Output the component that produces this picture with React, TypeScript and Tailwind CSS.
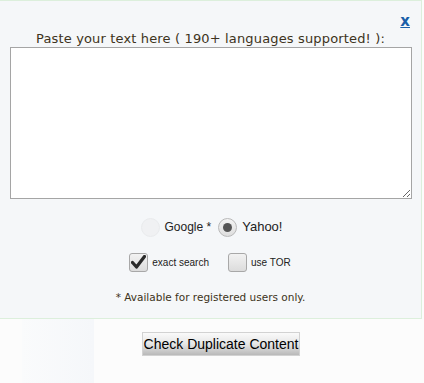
import { useState } from 'react'

export default function App() {
  const [engine, setEngine] = useState('yahoo')
  const [exact, setExact] = useState(true)
  const [tor, setTor] = useState(false)

  return (
    <div className="w-[424px] h-[383px] bg-[#fcfcfc] overflow-hidden">
      {/* main panel */}
      <div className="w-[422px] h-[319px] bg-[#f5f7f9] border-t border-r border-b border-[#dcefdc] flex flex-col">
        <div className="flex justify-end pr-[11px] pt-[12px] h-[30px]">
          <a
            href="#"
            className="text-[#1a5fa8] font-bold underline text-[15px] leading-[16px] font-['DejaVu_Sans',sans-serif]"
          >
            x
          </a>
        </div>
        <p className="text-center text-[13px] leading-[16px] text-[#3d3320] font-['DejaVu_Sans',sans-serif] tracking-[0.15px]">
          Paste your text here ( 190+ languages supported! ):
        </p>

        <div className="pl-[10px]">
          <textarea className="block w-[402px] h-[152px] bg-white border border-[#a5a5a5] resize-y outline-none" />
        </div>

        {/* search engine */}
        <div className="flex justify-center items-center gap-[3px] mt-[18px] h-[20px] font-['Liberation_Sans',sans-serif] text-[12px] text-[#222]">
          <span className="w-[19px] h-[19px] rounded-full border border-[#e9ebed] bg-[#f0f1f3] ml-[2px]" />
          <span className="ml-[2px] mr-[4px]">Google *</span>
          <button
            onClick={() => setEngine('yahoo')}
            className="w-[19px] h-[19px] rounded-full border border-[#b9b9b9] bg-gradient-to-b from-[#f4f4f4] to-[#dedede] flex items-center justify-center"
          >
            {engine === 'yahoo' && <span className="w-[9px] h-[9px] rounded-full bg-[#555]" />}
          </button>
          <span className="ml-[2px] text-[13px]">Yahoo!</span>
        </div>

        {/* options */}
        <div className="flex justify-center items-center mt-[15px] h-[20px] font-['Liberation_Sans',sans-serif] text-[10px] text-[#222] pr-[1px]">
          <button
            onClick={() => setExact(!exact)}
            className="w-[19px] h-[19px] rounded-[3px] border border-[#a8a8a8] bg-gradient-to-b from-[#f2f2f2] to-[#dcdcdc] flex items-center justify-center"
          >
            {exact && (
              <svg width="15" height="14" viewBox="0 0 15 14">
                <path d="M1.5 7.5 L5.5 12 L13.5 1.5" fill="none" stroke="#2a2a2a" strokeWidth="3.2" strokeLinecap="round" strokeLinejoin="round" />
              </svg>
            )}
          </button>
          <span className="ml-[4px] mr-[19px]">exact search</span>
          <button
            onClick={() => setTor(!tor)}
            className="w-[19px] h-[19px] rounded-[3px] border border-[#a8a8a8] bg-gradient-to-b from-[#f2f2f2] to-[#dcdcdc] flex items-center justify-center"
          >
            {tor && (
              <svg width="15" height="14" viewBox="0 0 15 14">
                <path d="M1.5 7.5 L5.5 12 L13.5 1.5" fill="none" stroke="#2a2a2a" strokeWidth="3.2" strokeLinecap="round" strokeLinejoin="round" />
              </svg>
            )}
          </button>
          <span className="ml-[4px]">use TOR</span>
        </div>

        <p className="text-center mt-[19px] text-[10.5px] leading-[12px] text-[#3d3320] font-['DejaVu_Sans',sans-serif]">
          * Available for registered users only.
        </p>
      </div>

      {/* submit */}
      <div className="flex">
        <div className="w-[72px] h-[64px] ml-[22px] bg-gradient-to-r from-[#fafbfc] to-[#f5f7fa]" />
        <div className="flex-1 flex justify-center pt-[13px] pr-[76px]">
          <button className="h-[24px] px-[1px] border border-[#d2d2d2] bg-gradient-to-b from-[#fafafa] via-[#e6e6e6] to-[#b9b9b9] font-['Liberation_Sans',sans-serif] text-[14px] leading-[20px] text-black">
            Check Duplicate Content
          </button>
        </div>
      </div>
    </div>
  )
}
